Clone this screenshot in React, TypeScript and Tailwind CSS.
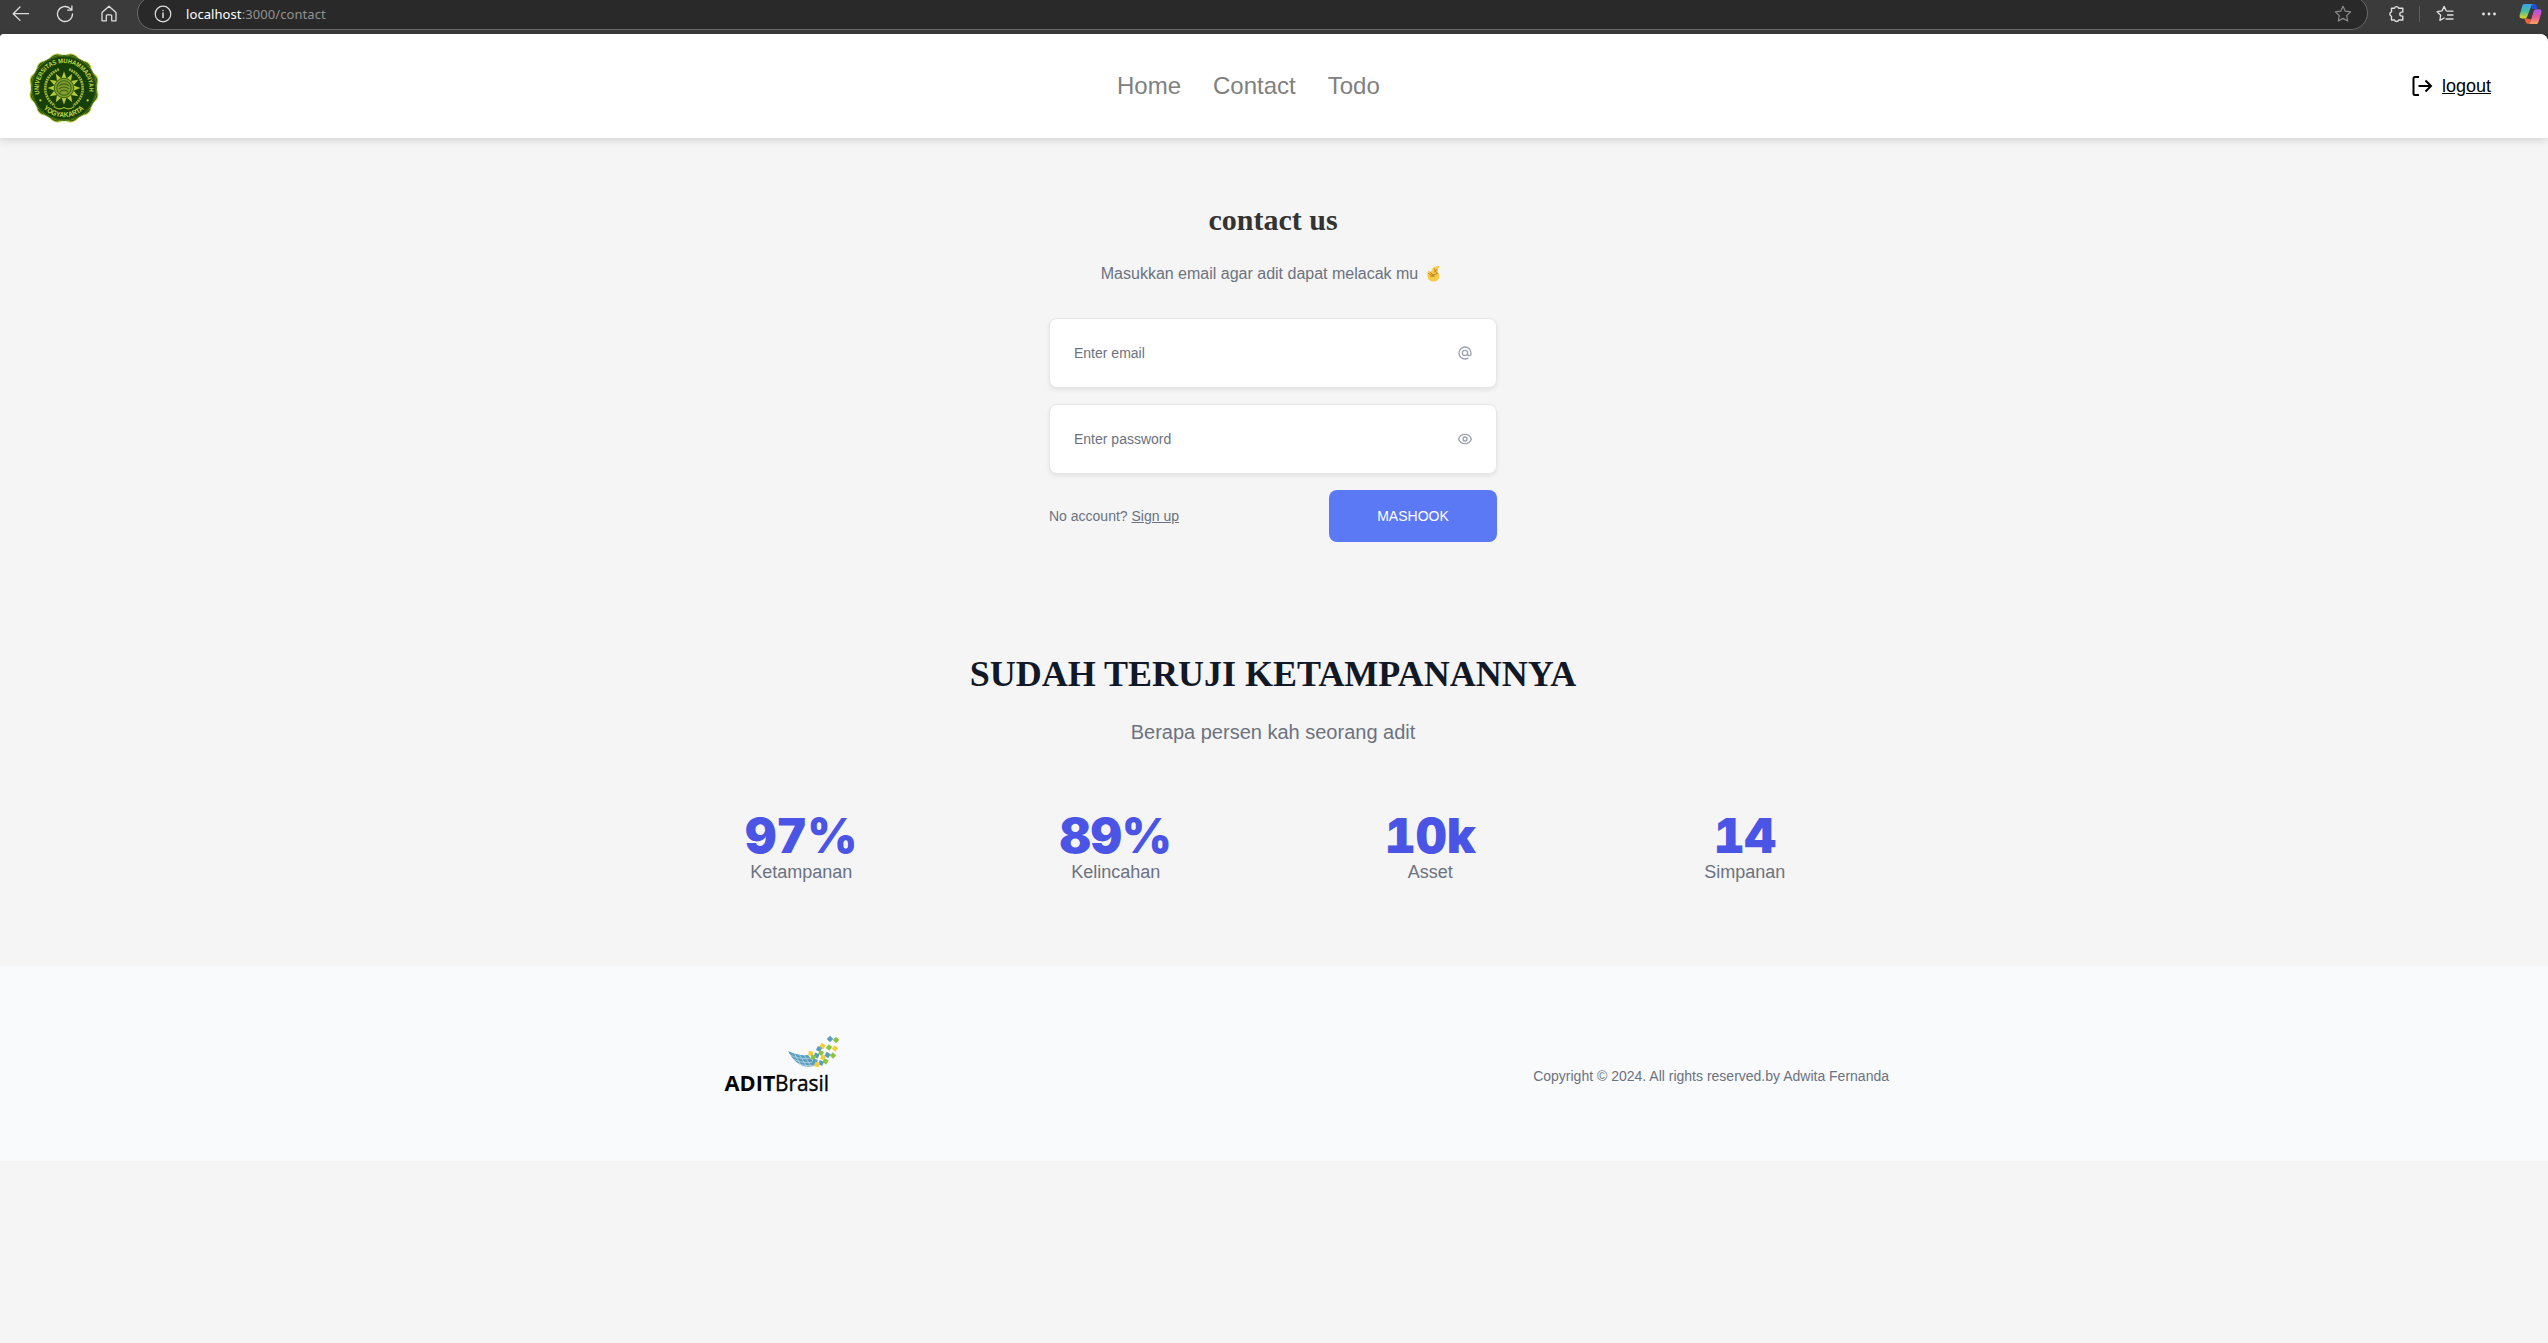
import React from "react";

const stroke = { fill: "none", strokeLinecap: "round", strokeLinejoin: "round" } as const;

function BrowserBar() {
  return (
    <div className="flex h-[34px] items-start overflow-hidden bg-[#3b3b3b] font-['Noto_Sans',sans-serif] text-white">
      <svg className="ml-3 mt-[5px] h-[18px] w-[18px]" viewBox="0 0 18 18" stroke="#dedede" strokeWidth="1.3" {...stroke}>
        <path d="M16.5 8.7H1.2M8 2 1.2 8.7 8 15.4" />
      </svg>
      <svg className="ml-[26px] mt-[5px] h-[18px] w-[18px]" viewBox="0 0 18 18" stroke="#dedede" strokeWidth="1.3" {...stroke}>
        <path d="M16.5 9a7.5 7.5 0 1 1-2.4-5.5L15.8 5M15.9 1v4.2h-4.2" />
      </svg>
      <svg className="ml-[26px] mt-[5px] h-[18px] w-[18px]" viewBox="0 0 18 18" stroke="#dedede" strokeWidth="1.3" {...stroke}>
        <path d="M2 7.6 9 1.2l7 6.4v8.2h-4.3v-5a1 1 0 0 0-1-1H7.300a1 1 0 0 0-1 1v5H2z" />
      </svg>
      <div className="ml-[19px] mt-[-4px] flex h-[34px] w-[2231px] items-center rounded-full border border-[#6a6a6a] bg-[#292929] pl-4 pr-[15px]">
        <svg className="mt-[2px] h-[18px] w-[18px]" viewBox="0 0 18 18" stroke="#dedede" strokeWidth="1.2" {...stroke}>
          <circle cx="9" cy="9" r="7.8" />
          <path d="M9 8v4.500M9 5.400v.2" strokeWidth="1.5" />
        </svg>
        <span className="ml-[14px] mt-px text-[13px] leading-[18px] tracking-[0.08px] text-[#929292]">
          <span className="text-white">localhost</span>:3000/contact
        </span>
        <svg className="ml-auto mt-[2px] h-[18px] w-[18px]" viewBox="0 0 18 18" stroke="#8c8c8c" strokeWidth="1.2" {...stroke}>
          <path d="m9 1.300 2.300 4.900 5.300.7-3.900 3.700 1 5.400L9 13.400 4.300 16l1-5.400L1.400 6.900l5.300-.7z" />
        </svg>
      </div>
      <svg className="ml-[20px] mt-[5px] h-[18px] w-[18px]" viewBox="0 0 18 18" stroke="#dedede" strokeWidth="1.4" {...stroke}>
        <path d="M3.500 3.200h3a2.200 2.200 0 0 1 4.200 0h4.100v3.900h-1a2 2 0 0 0 0 4h1V15h-4.100a2.200 2.200 0 0 1-4.200 0h-3v-3.700a2.300 2.300 0 0 1 0-4.400z" />
      </svg>
      <div className="ml-[13px] mt-[6px] h-[16px] w-px bg-[#5e5e5e]" />
      <svg className="ml-[16px] mt-[5px] h-[18px] w-[18px]" viewBox="0 0 18 18" stroke="#dedede" strokeWidth="1.300" {...stroke}>
        <path d="M10 5.600 8.200 1.400 6 5.900l-4.900.8 3.600 3.500-.8 5.200L8.200 13M11 6.200h6M11.500 10h5.500M10 14h7" />
      </svg>
      <svg className="ml-[26px] mt-[5px] h-[18px] w-[18px]" viewBox="0 0 18 18" fill="#e6e6e6">
        <circle cx="3.500" cy="9" r="1.400" />
        <circle cx="9" cy="9" r="1.400" />
        <circle cx="14.500" cy="9" r="1.400" />
      </svg>
      <svg className="ml-[21px] mt-[3px] h-[22px] w-[23px] shrink-0" viewBox="0 0 23 22">
        <defs>
          <linearGradient id="cpA" x1="0" y1="0" x2="0" y2="1">
            <stop offset="0" stopColor="#3aa0f0" />
            <stop offset=".5" stopColor="#45bfa0" />
            <stop offset="1" stopColor="#e8d51e" />
          </linearGradient>
          <linearGradient id="cpB" x1="0" y1="0" x2="0" y2="1">
            <stop offset="0" stopColor="#a855f0" />
            <stop offset=".5" stopColor="#e8559a" />
            <stop offset="1" stopColor="#f7a35c" />
          </linearGradient>
        </defs>
        <path d="M12 1h3.500c1.700 0 2 1.800 2.800 5h-5z" fill="#2350d8" />
        <path d="M5.500 15c.6 3 1.200 5.800 3.500 5.800 2 0 2.700-2 3.200-4.300z" fill="#f0603c" />
        <path d="M5 1h9.500c-1.700 0-2.300 1.700-3 4L8.400 13c-.6 1.700-1.500 2.500-3 2.500H3C.5 15.500.2 13.500.9 11.300l2-7C3.600 2 4 1 5 1z" fill="url(#cpA)" />
        <path d="M18 21H9c1.700 0 2.300-1.700 3-4l2.600-8.500c.5-1.600 1.500-2.300 3-2.300h2.500c2.400 0 2.700 2 2 4.200l-2 6.700c-.7 2.300-1.100 3.900-2.100 3.900z" fill="url(#cpB)" />
      </svg>
    </div>
  );
}

const rays = Array.from({ length: 12 }, (_, i) => i * 30);

function Seal() {
  return (
    <svg className="h-[70px] w-[72px]" viewBox="-35 -34 70 68" fontFamily="Liberation Sans, sans-serif" fontWeight="bold">
      <defs>
        <path id="sealTop" d="M-23.800 6A24.500 24.500 0 1 1 23.800 6" />
        <path id="sealBottom" d="M-21.500 18.500A28.300 28.300 0 0 0 21.500 18.500" />
      </defs>
      {rays.map((r) => (
        <circle key={r} cx="0" cy="-25.500" r="8.300" fill="#23500c" stroke="#b5c832" strokeWidth="1" transform={`rotate(${r + 15})`} />
      ))}
      <circle r="32" fill="#164008" stroke="#7f9e22" strokeWidth=".7" />
      <circle r="30.800" fill="none" stroke="#69891e" strokeWidth=".5" />
      <text fontSize="6.300" fill="#c6da42">
        <textPath href="#sealTop" startOffset="0" textLength="86" lengthAdjust="spacingAndGlyphs">UNIVERSITAS MUHAMMADIYAH</textPath>
      </text>
      <text fontSize="7" fill="#c6da42">
        <textPath href="#sealBottom" startOffset="2" textLength="44" lengthAdjust="spacingAndGlyphs">YOGYAKARTA</textPath>
      </text>
      <circle cx="-23" cy="12" r="1.100" fill="#c6da42" />
      <circle cx="23" cy="12" r="1.100" fill="#c6da42" />
      <path d="M-5-18A19.500 19.500 0 0 0-9 17" fill="none" stroke="#a2b937" strokeWidth="2.600" strokeDasharray="1.700 .7" />
      <path d="M5-18A19.500 19.500 0 0 1 9 17" fill="none" stroke="#a2b937" strokeWidth="2.600" strokeDasharray="1.700 .7" />
      <path d="M-10 18q5 4 10 1 5 3 10-1" fill="none" stroke="#a2b937" strokeWidth="1" />
      {rays.map((r) => (
        <path key={r} d="M-2.600-9 0-16 2.600-9z" fill="#b6c93a" transform={`rotate(${r})`} />
      ))}
      <circle r="9.500" fill="#839e2c" stroke="#2d5b10" strokeWidth=".8" />
      <circle r="7" fill="none" stroke="#3d6818" strokeWidth="1" />
      <path d="M-5-2q5-4 10 0M-5 1q5-4 10 0M-4 4q4-4 8 0" fill="none" stroke="#365f16" strokeWidth="1" />
    </svg>
  );
}

function Header() {
  return (
    <header className="relative flex h-[104px] items-center rounded-tl rounded-tr-lg bg-white shadow-[0_2px_8px_rgba(0,0,0,0.15)]">
      <div className="ml-[28px] mt-[4px] flex w-[72px]">
        <Seal />
      </div>
      <nav className="ml-[1017px] flex gap-8 text-2xl text-[#808080]">
        <a>Home</a>
        <a>Contact</a>
        <a>Todo</a>
      </nav>
      <a className="ml-auto mr-[57px] flex items-center gap-[9px] text-lg text-black">
        <svg className="h-[22px] w-[22px]" viewBox="0 0 22 22" stroke="#000" strokeWidth="2" fill="none">
          <path d="M8 2H4a1.500 1.500 0 0 0-1.500 1.500v15A1.500 1.500 0 0 0 4 20h4" />
          <path d="M7.500 11H20M14.500 5.500 20 11l-5.500 5.500" />
        </svg>
        <span className="underline">logout</span>
      </a>
    </header>
  );
}

function CrossedFingers() {
  return (
    <svg className="mb-[2px] ml-[9px] h-[17px] w-[13px]" viewBox="0 0 13 17">
      <path d="M3.500 7 5.500 4.500C5 2.500 6.800 1.600 8 2.300L10.600.8c1.200-.6 2.200.6 1.400 1.600L10.600 4.500l.3 3c1.200.8 1.500 2 1.400 4-.3 3.300-2.600 5-5.800 5C2.800 16.500.6 14.200.6 11V7.500C.8 5.800 3 5.500 3.500 7z" fill="#f6cb45" />
      <path d="M1.500 8.500 5 10.500l5.500-2M7.500 4 9.500 7.800M3.800 7.500l3.500 4.500M9.800 4.500 7.500 7M3.500 11.300l3.500-.5" stroke="#b87a22" strokeWidth=".9" fill="none" strokeLinecap="round" />
    </svg>
  );
}

function Field({ label, children }: { label: string; children: React.ReactNode }) {
  return (
    <label className="flex h-[70px] items-center justify-between rounded-lg border border-gray-200 bg-white pl-6 pr-[23px] text-sm text-[#6b7280] shadow-[0_2px_4px_rgba(0,0,0,0.08)]">
      <span>{label}</span>
      <svg className="h-4 w-4" viewBox="0 0 24 24" stroke="#9ca3af" strokeWidth="2" {...stroke}>
        {children}
      </svg>
    </label>
  );
}

function ContactForm() {
  return (
    <section className="mx-auto w-[448px] pt-[62px]">
      <h1 className="text-center font-['Liberation_Serif',serif] text-3xl font-bold leading-10 text-[#333]">contact us</h1>
      <p className="mt-[22px] flex h-6 items-center justify-center pr-[5px] text-base leading-6 text-[#6b7280]">
        Masukkan email agar adit dapat melacak mu
        <CrossedFingers />
      </p>
      <form className="mt-[32px] flex flex-col gap-4">
        <Field label="Enter email">
          <path d="M16 12a4 4 0 1 0-8 0 4 4 0 0 0 8 0zm0 0v1.500a2.500 2.500 0 0 0 5 0V12a9 9 0 1 0-9 9m4.500-1.206a8.959 8.959 0 0 1-4.500 1.207" />
        </Field>
        <Field label="Enter password">
          <path d="M15 12a3 3 0 1 1-6 0 3 3 0 0 1 6 0z" />
          <path d="M2.458 12C3.732 7.943 7.523 5 12 5c4.478 0 8.268 2.943 9.542 7-1.274 4.057-5.064 7-9.542 7-4.477 0-8.268-2.943-9.542-7z" />
        </Field>
        <div className="flex items-center justify-between text-sm">
          <p className="text-[#6b7280]">
            No account? <a className="underline">Sign up</a>
          </p>
          <button type="button" className="h-[52px] w-[168px] rounded-lg bg-[#5c79f5] text-white">
            MASHOOK
          </button>
        </div>
      </form>
    </section>
  );
}

const stats = [
  ["97%", "Ketampanan"],
  ["89%", "Kelincahan"],
  ["10k", "Asset"],
  ["14", "Simpanan"],
];

function Stats() {
  return (
    <section className="mx-auto w-[1218px] pt-[112px] text-center">
      <h2 className="font-['Liberation_Serif',serif] text-4xl font-bold leading-10 text-[#111827]">SUDAH TERUJI KETAMPANANNYA</h2>
      <p className="mt-[24px] text-xl leading-7 text-[#6b7280]">Berapa persen kah seorang adit</p>
      <dl className="mt-[66px] grid grid-cols-4 gap-10">
        {stats.map(([value, label]) => (
          <div key={label} className="flex flex-col">
            <dd className="font-['Inter',sans-serif] text-[48px] font-black leading-[48px] tabular-nums text-[#4b55e5]">{value}</dd>
            <dt className="text-lg leading-6 text-[#6b7280]">{label}</dt>
          </div>
        ))}
      </dl>
    </section>
  );
}

const tiles: [number, number, string, number][] = [
  [42, 4, "#5b9cbf", 45], [48, 5, "#8cc63f", 45], [34.500, 11, "#f2ce3c", 30], [41, 12.500, "#8cc63f", 38], [47, 13.500, "#f2ce3c", 40],
  [31, 14, "#5b9cbf", 28], [22.800, 18.500, "#f2ce3c", 10], [28.500, 20.500, "#5b9cbf", 20], [33, 18, "#8cc63f", 25], [39.500, 20, "#5b9cbf", 32],
  [45, 20.500, "#8cc63f", 40], [25, 22.500, "#8cc63f", 15], [35, 22.500, "#f2ce3c", 25], [27, 26.500, "#5b9cbf", 15], [37.500, 26.300, "#8cc63f", 32],
  [33, 28, "#5b9cbf", 25], [29, 29.500, "#f2ce3c", 15],
];

function BrandLogo() {
  return (
    <svg className="h-[60px] w-[120px] overflow-visible" viewBox="0 0 120 60">
      <g transform="translate(64 0)">
        <path d="M0 16q10 5 20 4l4 5 5 5Q11 37 0 16z" fill="#5b9cbf" />
        <path d="M2 20q10 5 22 3M5 24q9 5 22 3M9 28q8 4 19 2M6 18l8 14M11 19l8 13M16 20l8 13" stroke="#d5e5ee" strokeWidth=".6" fill="none" />
        {tiles.map(([x, y, color, angle]) => (
          <rect key={`${x}-${y}`} x={x - 2.300} y={y - 2.300} width="4.600" height="4.600" fill={color} transform={`rotate(${angle} ${x} ${y})`} />
        ))}
      </g>
      <text x="0.500" y="56" fontFamily="Open Sans, sans-serif" fontSize="21.500" fontWeight="700" textLength="51" lengthAdjust="spacingAndGlyphs" fill="#050505">ADIT</text>
      <text x="51" y="56" fontFamily="Open Sans, sans-serif" fontSize="21.500" textLength="54" lengthAdjust="spacingAndGlyphs" fill="#050505" stroke="#050505" strokeWidth=".4">Brasil</text>
    </svg>
  );
}

function Footer() {
  return (
    <footer className="mt-[82px] h-[195px] bg-[#f9fafc] pr-[2px]">
      <div className="mx-auto flex w-[1232px] items-start justify-between">
        <div className="ml-[67px] pt-[69px]">
          <BrandLogo />
        </div>
        <p className="pt-[100px] text-sm text-[#6b7280]">Copyright © 2024. All rights reserved.by Adwita Fernanda</p>
      </div>
    </footer>
  );
}

export default function App() {
  return (
    <div className="flex h-[1343px] flex-col overflow-hidden bg-[#333] font-['Liberation_Sans',Arial,sans-serif]">
      <BrowserBar />
      <div className="flex-1 rounded-tl rounded-tr-lg bg-[#f5f5f5]">
        <Header />
        <main className="pr-[2px]">
          <ContactForm />
          <Stats />
        </main>
        <Footer />
      </div>
    </div>
  );
}
